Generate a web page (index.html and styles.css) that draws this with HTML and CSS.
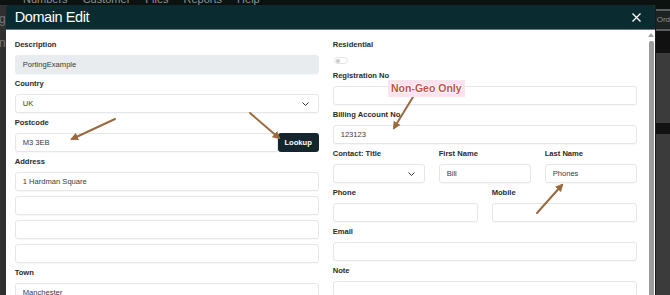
FILE: index.html
```html
<!DOCTYPE html>
<html lang="en">
<head>
  <meta charset="UTF-8">
  <meta name="viewport" content="width=device-width, initial-scale=1.0">
  <title>Domain Edit</title>
  <link rel="stylesheet" href="styles.css">
</head>
<body>
  <nav class="topnav">
    <span>Numbers</span>
    <span>Customer</span>
    <span>Files</span>
    <span>Reports</span>
    <span>Help</span>
  </nav>

  <div class="stage">
    <div class="side-left">
      <span class="ghost g1">g</span>
      <span class="ghost g2">n</span>
    </div>

    <div class="modal">
      <div class="modal-header">
        <h1>Domain Edit</h1>
        <button class="close" type="button" aria-label="Close">
          <svg width="9" height="9" viewBox="0 0 9 9"><path d="M0.5 0.5 L8.5 8.5 M8.5 0.5 L0.5 8.5" stroke="#fff" stroke-width="1.3" fill="none"/></svg>
        </button>
      </div>

      <div class="modal-body">
        <form class="form-area">
          <div class="col">
            <div class="form-group">
              <label>Description</label>
              <div class="input disabled">PortingExample</div>
            </div>
            <div class="form-group">
              <label>Country</label>
              <div class="input select">UK
                <svg class="chevron" width="7" height="4" viewBox="0 0 7 4"><path d="M0.5 0.5 L3.5 3.5 L6.5 0.5" stroke="#333" stroke-width="1" fill="none"/></svg>
              </div>
            </div>
            <div class="form-group">
              <label>Postcode</label>
              <div class="input-group">
                <div class="input">M3 3EB</div>
                <button type="button" class="btn-lookup">Lookup</button>
              </div>
            </div>
            <div class="form-group">
              <label>Address</label>
              <div class="stack">
                <div class="input">1 Hardman Square</div>
                <div class="input"></div>
                <div class="input"></div>
                <div class="input"></div>
              </div>
            </div>
            <div class="form-group">
              <label>Town</label>
              <div class="input">Manchester</div>
            </div>
          </div>

          <div class="col">
            <div class="form-group">
              <label>Residential</label>
              <div class="switch-row"><span class="switch"></span></div>
            </div>
            <div class="form-group">
              <label>Registration No</label>
              <div class="input"></div>
            </div>
            <div class="form-group">
              <label>Billing Account No</label>
              <div class="input">123123</div>
            </div>
            <div class="row-3">
              <div class="form-group">
                <label>Contact: Title</label>
                <div class="input select">
                  <svg class="chevron" width="7" height="4" viewBox="0 0 7 4"><path d="M0.5 0.5 L3.5 3.5 L6.5 0.5" stroke="#333" stroke-width="1" fill="none"/></svg>
                </div>
              </div>
              <div class="form-group">
                <label>First Name</label>
                <div class="input">Bill</div>
              </div>
              <div class="form-group">
                <label>Last Name</label>
                <div class="input">Phones</div>
              </div>
            </div>
            <div class="row-2">
              <div class="form-group">
                <label>Phone</label>
                <div class="input"></div>
              </div>
              <div class="form-group">
                <label>Mobile</label>
                <div class="input"></div>
              </div>
            </div>
            <div class="form-group">
              <label>Email</label>
              <div class="input"></div>
            </div>
            <div class="form-group">
              <label>Note</label>
              <div class="input"></div>
            </div>
          </div>
        </form>

        <div class="scrollbar">
          <span class="scroll-up"></span>
          <span class="scroll-thumb"></span>
        </div>
      </div>
    </div>

    <div class="side-right">
      <div class="sr-top"></div>
      <div class="sr-line"></div>
      <div class="sr-tab">Ord</div>
      <div class="sr-line"></div>
      <div class="sr-dark"></div>
      <div class="sr-gray"></div>
      <div class="sr-band"></div>
    </div>
  </div>

  <!-- annotation arrows drawn over the screenshot -->
  <svg class="annotations" width="670" height="295" viewBox="0 0 670 295">
    <defs>
      <marker id="head" markerWidth="8" markerHeight="8" refX="6" refY="4" orient="auto" markerUnits="userSpaceOnUse">
        <path d="M0 0 L8 4 L0 8 Z" fill="#9a6a3e"/>
      </marker>
    </defs>
    <g stroke="#9a6a3e" stroke-width="2" stroke-linecap="round" marker-end="url(#head)">
      <line x1="115" y1="119" x2="72" y2="139"/>
      <line x1="250" y1="113" x2="279" y2="138"/>
      <line x1="413" y1="97" x2="394" y2="128"/>
      <line x1="537" y1="213" x2="562" y2="185"/>
    </g>
  </svg>
  <span class="callout">Non-Geo Only</span>
</body>
</html>
```

FILE: styles.css
```css
* {
  margin: 0;
  padding: 0;
  box-sizing: border-box;
  font-family: 'Liberation Sans', Arial, sans-serif;
}

body {
  width: 670px;
  height: 295px;
  overflow: hidden;
  background-color: #333;
  position: relative;
}

.topnav {
  height: 5px;
  background-color: #0b1210;
  display: flex;
  align-items: flex-end;
  gap: 15px;
  padding-left: 23px;
  overflow: hidden;
}

.topnav span {
  font-size: 11px;
  line-height: 11px;
  color: #8d9694;
  flex-shrink: 0;
}

.stage {
  display: flex;
  height: 290px;
}

.side-left {
  width: 6px;
  background-color: #303030;
  display: flex;
  flex-direction: column;
  align-items: flex-end;
  overflow: hidden;
}

.ghost {
  font-size: 12px;
  color: #777;
  line-height: 12px;
}

.g1 { margin-top: 8px; }
.g2 { margin-top: 12px; }

.modal {
  width: 650px;
  display: flex;
  flex-direction: column;
}

.modal-header {
  height: 25px;
  flex-shrink: 0;
  background-color: #0a2c31;
  border-bottom: 1px solid #3e8d88;
  border-radius: 3px 3px 0 0;
  display: flex;
  align-items: center;
  justify-content: space-between;
  padding: 0 14px 0 9px;
}

.modal-header h1 {
  color: #fff;
  font-size: 14.5px;
  font-weight: normal;
  letter-spacing: -0.4px;
}

.close {
  background: none;
  border: none;
  width: 9px;
  height: 9px;
  display: flex;
}

.modal-body {
  flex: 1;
  min-height: 0;
  overflow: hidden;
  background-color: #fff;
  display: flex;
}

.form-area {
  width: 622px;
  margin: 0 11px 0 9px;
  padding-top: 10px;
  display: grid;
  grid-template-columns: 304px 304px;
  column-gap: 14px;
  align-items: start;
}

.form-group {
  margin-bottom: 5px;
}

label {
  display: block;
  font-size: 7.6px;
  line-height: 10px;
  font-weight: bold;
  color: #2b2b2b;
  margin-bottom: 5px;
}

.input {
  height: 19px;
  border: 1px solid #e4e6e9;
  border-radius: 3px;
  background-color: #fff;
  box-shadow: 0 1px 1px rgba(0, 0, 0, 0.03);
  padding: 0 7px;
  font-size: 7.6px;
  color: #3a3a3a;
  display: flex;
  align-items: center;
}

.input.disabled {
  background-color: #e9ecef;
  border-color: #e9ecef;
}

.input.select {
  justify-content: space-between;
  padding-right: 9px;
}

.chevron {
  margin-left: auto;
}

.input-group {
  display: flex;
}

.input-group .input {
  flex: 1;
  border-radius: 3px 0 0 3px;
}

.btn-lookup {
  width: 41px;
  height: 19px;
  background-color: #14252d;
  color: #fff;
  border: none;
  border-radius: 3px;
  font-size: 7.6px;
  font-weight: bold;
}

.stack {
  display: flex;
  flex-direction: column;
  gap: 5px;
}

.switch-row {
  height: 11px;
  display: flex;
  align-items: center;
  padding-left: 1px;
}

.switch {
  width: 14px;
  height: 7px;
  border: 1px solid #e2e2e2;
  border-radius: 4px;
  display: flex;
  align-items: center;
  padding-left: 1px;
}

.switch::before {
  content: "";
  width: 4px;
  height: 4px;
  border-radius: 50%;
  background-color: #c9c9c9;
}

.row-3 {
  display: grid;
  grid-template-columns: 1fr 1fr 1fr;
  column-gap: 14px;
}

.row-2 {
  display: grid;
  grid-template-columns: 1fr 1fr;
  column-gap: 14px;
}

.scrollbar {
  width: 7px;
  display: flex;
  flex-direction: column;
  align-items: center;
  padding-top: 3px;
}

.scroll-up {
  width: 0;
  height: 0;
  border-left: 3px solid transparent;
  border-right: 3px solid transparent;
  border-bottom: 4px solid #a3a3a3;
  margin-bottom: 4px;
}

.scroll-thumb {
  width: 5px;
  flex: 1;
  background-color: #9b9b9b;
  border-radius: 2px 2px 0 0;
}

.side-right {
  flex: 1;
  background-color: #3b3b3b;
  border-left: 1px solid #1a1a1a;
  display: flex;
  flex-direction: column;
}

.sr-top {
  height: 4px;
  background-color: #0c1210;
}

.sr-line {
  height: 2px;
  background-color: #5d5f5e;
}

.sr-tab {
  height: 18px;
  background-color: #1d2322;
  color: #8a8f8e;
  font-size: 8px;
  line-height: 18px;
  padding-left: 1px;
  white-space: nowrap;
  overflow: hidden;
}

.sr-dark {
  height: 22px;
  background-color: #111;
}

.sr-gray {
  height: 70px;
}

.sr-band {
  height: 11px;
  background-color: #121212;
}

.annotations {
  position: absolute;
  left: 0;
  top: 0;
  pointer-events: none;
}

.callout {
  position: absolute;
  left: 388px;
  top: 80px;
  padding: 1px 3px;
  background-color: #fce3ef;
  color: #c64f47;
  font-size: 10.5px;
  font-weight: bold;
  line-height: 15px;
  text-shadow: -1px 0 #fff, 1px 0 #fff, 0 -1px #fff, 0 1px #fff;
}
```
